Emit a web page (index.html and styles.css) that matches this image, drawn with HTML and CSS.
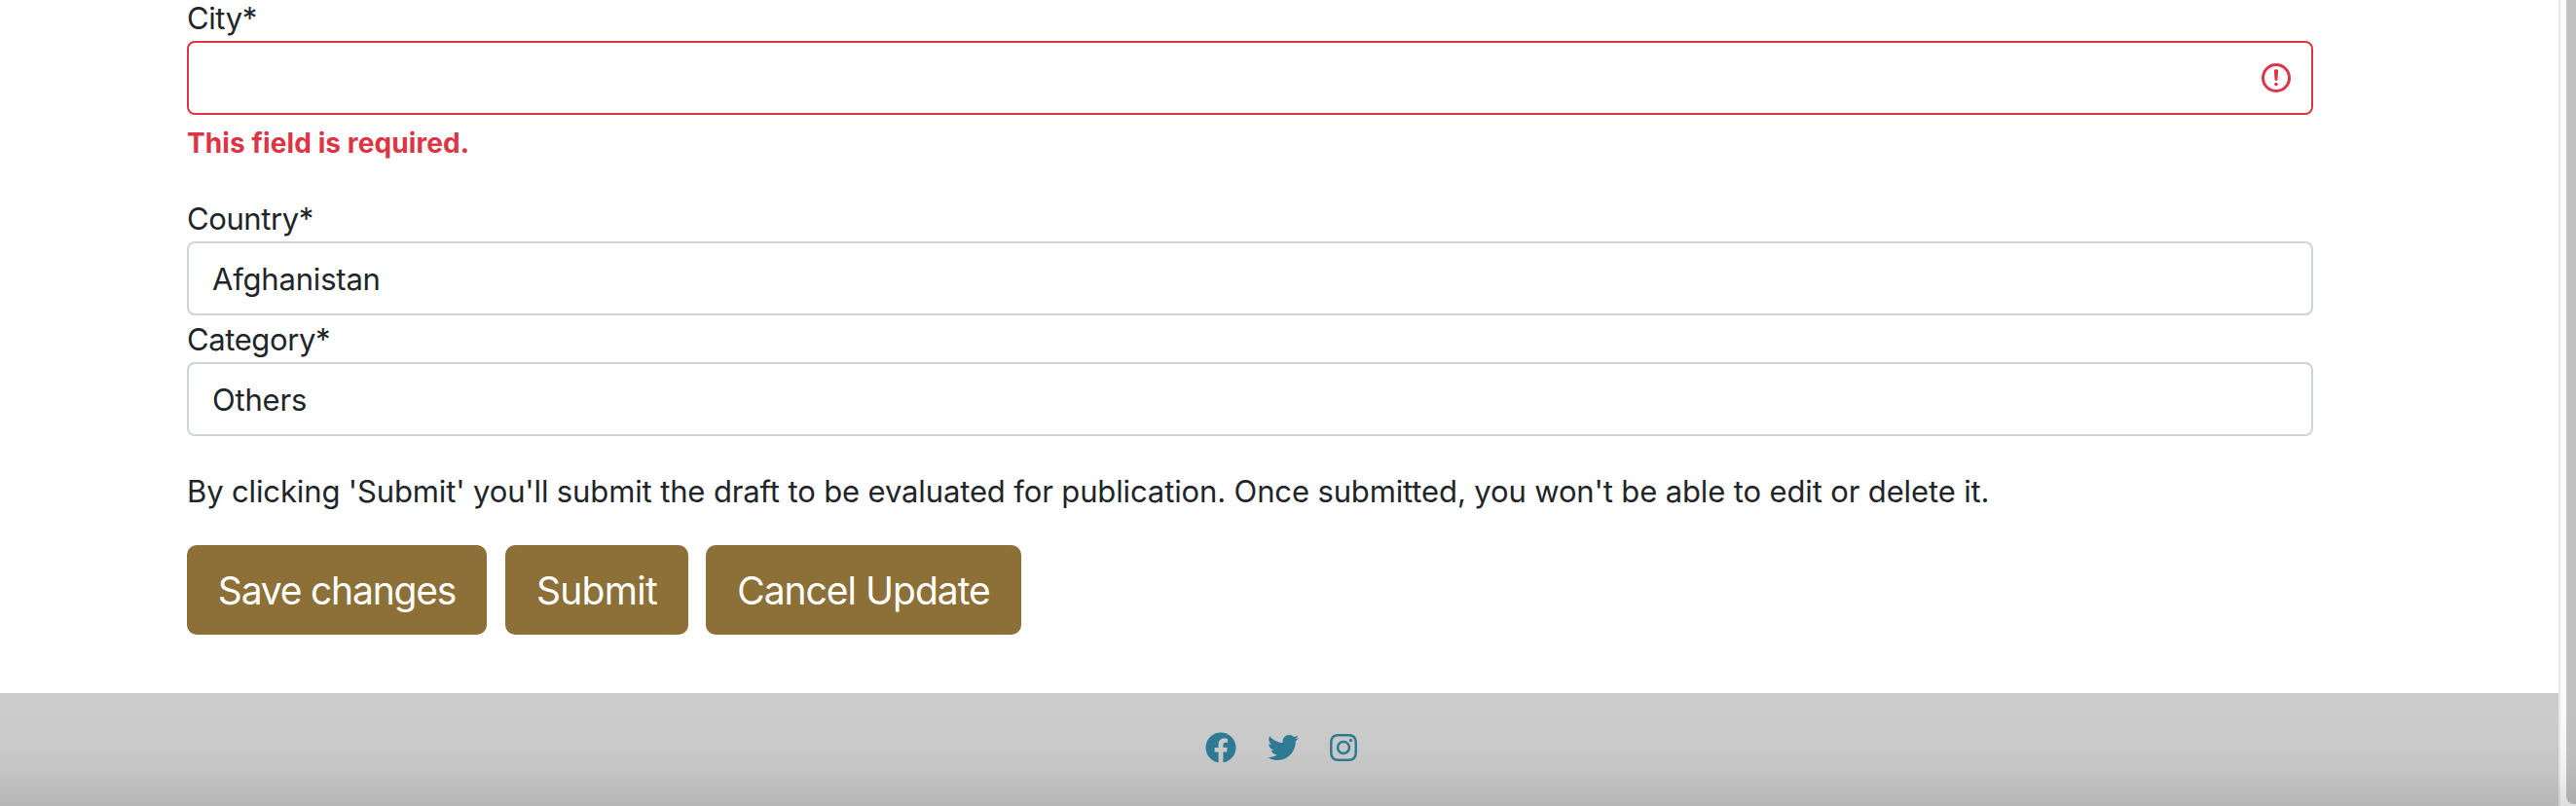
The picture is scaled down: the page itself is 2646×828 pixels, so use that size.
FILE: index.html
```html
<!DOCTYPE html>
<html lang="en">
<head>
<meta charset="utf-8">
<title>Update draft</title>
<link rel="stylesheet" href="styles.css">
</head>
<body>
<div class="window">
  <div class="page">
    <main class="form">
      <label class="label">City*</label>
      <div class="control invalid">
        <svg class="alert" viewBox="0 0 12 12" fill="none" stroke="#dc3545"><circle cx="6" cy="6" r="4.5"/><path stroke-linejoin="round" d="M5.8 3.6h.4L6 6.5z"/><circle cx="6" cy="8.2" r=".6" fill="#dc3545" stroke="none"/></svg>
      </div>
      <div class="error"><span class="error-text">This field is required.</span></div>
      <label class="label">Country*</label>
      <div class="control"><span class="country">Afghanistan</span></div>
      <label class="label category">Category*</label>
      <div class="control"><span class="value">Others</span></div>
      <p class="note"><span class="note-text">By clicking 'Submit' you'll submit the draft to be evaluated for publication. Once submitted, you won't be able to edit or delete it.</span></p>
      <div class="actions">
        <button class="btn save">Save changes</button>
        <button class="btn submit">Submit</button>
        <button class="btn cancel">Cancel Update</button>
      </div>
    </main>
    <footer class="footer">
      <svg class="icon" viewBox="0 0 512 512"><path d="M504 256C504 119 393 8 256 8S8 119 8 256c0 123.78 90.69 226.38 209.25 245V327.69h-63V256h63v-54.64c0-62.15 37-96.48 93.67-96.48 27.14 0 55.52 4.84 55.52 4.84v61h-31.28c-30.8 0-40.41 19.12-40.41 38.73V256h68.78l-11 71.69h-57.78V501C413.31 482.38 504 379.78 504 256z"/></svg>
      <svg class="icon" viewBox="0 0 512 512"><path d="M459.37 151.716c.325 4.548.325 9.097.325 13.645 0 138.72-105.583 298.558-298.558 298.558-59.452 0-114.68-17.219-161.137-47.106 8.447.974 16.568 1.299 25.34 1.299 49.055 0 94.213-16.568 130.274-44.832-46.132-.975-84.792-31.188-98.112-72.772 6.498.974 12.995 1.624 19.818 1.624 9.421 0 18.843-1.3 27.614-3.573-48.081-9.747-84.143-51.98-84.143-102.985v-1.299c13.969 7.797 30.214 12.67 47.431 13.319-28.264-18.843-46.781-51.005-46.781-87.391 0-19.492 5.197-37.36 14.294-52.954 51.655 63.675 129.3 105.258 216.365 109.807-1.624-7.797-2.599-15.918-2.599-24.04 0-57.828 46.782-104.934 104.934-104.934 30.213 0 57.502 12.67 76.67 33.137 23.715-4.548 46.456-13.32 66.599-25.34-7.798 24.366-24.366 44.833-46.132 57.827 21.117-2.273 41.584-8.122 60.426-16.243-14.292 20.791-32.161 39.308-52.628 54.253z"/></svg>
      <svg class="icon narrow" viewBox="0 0 448 512"><path d="M224.1 141c-63.6 0-114.9 51.3-114.9 114.9s51.3 114.9 114.9 114.9S339 319.5 339 255.9 287.7 141 224.1 141zm0 189.6c-41.1 0-74.7-33.5-74.7-74.7s33.5-74.7 74.7-74.7 74.7 33.5 74.7 74.7-33.6 74.7-74.7 74.7zm146.4-194.3c0 14.9-12 26.8-26.8 26.8-14.9 0-26.8-12-26.8-26.8s12-26.8 26.8-26.8 26.8 12 26.8 26.8zm76.1 27.2c-1.7-35.9-9.9-67.7-36.2-93.9-26.2-26.2-58-34.4-93.9-36.2-37-2.1-147.9-2.1-184.9 0-35.8 1.7-67.6 9.9-93.9 36.1s-34.4 58-36.2 93.9c-2.1 37-2.1 147.9 0 184.9 1.7 35.9 9.9 67.7 36.2 93.9s58 34.4 93.9 36.2c37 2.1 147.9 2.1 184.9 0 35.9-1.7 67.7-9.9 93.9-36.2 26.2-26.2 34.4-58 36.2-93.9 2.1-37 2.1-147.8 0-184.8zM398.8 388c-7.8 19.6-22.9 34.7-42.6 42.6-29.5 11.7-99.5 9-132.1 9s-102.7 2.6-132.1-9c-19.6-7.8-34.7-22.9-42.6-42.6-11.7-29.5-9-99.5-9-132.1s-2.6-102.7 9-132.1c7.8-19.6 22.9-34.7 42.6-42.6 29.5-11.7 99.5-9 132.1-9s102.7-2.6 132.1 9c19.6 7.8 34.7 22.9 42.6 42.6 11.7 29.5 9 99.5 9 132.1s2.7 102.7-9 132.1z"/></svg>
    </footer>
  </div>
  <div class="track"><div class="thumb"></div></div>
  <div class="shade"></div>
</div>
</body>
</html>
```
FILE: styles.css
```css
* { box-sizing: border-box; }
body { margin: 0; overflow: hidden; font-family: Inter, "Liberation Sans", sans-serif; font-size: 31px; color: #212529; background: #fff; }
.window { position: relative; display: flex; height: 828px; }
.page { width: 2628px; display: flex; flex-direction: column; }
.form { height: 712px; padding: 0 252px 0 192px; }
.label { display: block; height: 42px; padding-top: 1px; line-height: 36px; letter-spacing: -0.4px; white-space: nowrap; }
.category { height: 48px; padding-top: 7px; }
.control { display: flex; align-items: center; height: 76px; padding: 0 24px; border: 2px solid #ced4da; border-radius: 8px; letter-spacing: -0.2px; }
.invalid { justify-content: flex-end; padding-right: 18px; border-color: #dc3545; }
.alert { width: 36px; height: 36px; }
.error { height: 88px; padding-top: 8px; font-size: 28px; line-height: 42px; font-weight: 700; letter-spacing: 0.1px; color: #dc3545; }
.note { height: 112px; margin: 0; padding-top: 33px; line-height: 48px; letter-spacing: -0.13px; white-space: nowrap; }
.actions { display: flex; height: 92px; }
.btn { height: 92px; padding: 1px 0 0; border: 0; border-radius: 10px; background: #8c7037; color: #fff; font: 39px/91px Inter, "Liberation Sans", sans-serif; letter-spacing: -0.8px; white-space: nowrap; }
.save { width: 308px; margin-right: 19px; letter-spacing: -1.2px; }
.submit { width: 188px; margin-right: 18px; letter-spacing: -0.7px; }
.cancel { width: 324px; letter-spacing: -1px; }
.footer { flex: 1; display: flex; gap: 32px; padding: 40px 0 0 1238px; background: #ccc; }
.icon { width: 32px; height: 32px; fill: #2f7c96; }
.narrow { width: 28px; }
.track { width: 18px; padding-left: 6px; border-left: 2px solid #e8e8e8; background: #fafafa; }
.thumb { height: 826px; background: #c1c1c1; border-bottom-left-radius: 8px; }
.shade { position: absolute; left: 0; right: 0; bottom: 0; height: 100px; background: linear-gradient(transparent, rgba(0,0,0,.015) 40%, rgba(0,0,0,.04) 65%, rgba(0,0,0,.11)); }
```
